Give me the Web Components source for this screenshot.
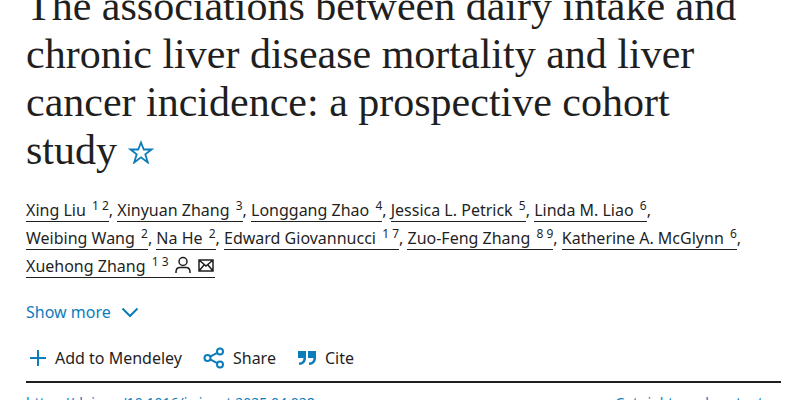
<!DOCTYPE html>
<html lang="en">
<head>
<meta charset="utf-8">
<title>The associations between dairy intake and chronic liver disease mortality and liver cancer incidence</title>
<style>
html{overflow:hidden}
body{margin:0;background:#fff;color:#1f1f1f;font-family:"Noto Sans","Open Sans",sans-serif;font-size:16px}
</style>
</head>
<body>
<article-header></article-header>
<script>
class ArticleTitle extends HTMLElement{
  constructor(){super();this.attachShadow({mode:'open'}).innerHTML=`
<style>
:host{display:block;padding-right:20px}
h1{margin:0;font:400 42px/48px "Liberation Serif",serif;color:#1f1f1f}
a{display:inline-block;line-height:0}
svg{width:26px;height:24px;fill:none;stroke:#0c7dbb;stroke-width:1.8}
</style>
<h1><slot></slot> <a href="#note" aria-label="Article note"><svg viewBox="0 0 26 24"><path d="M13 2.5 15.8 9.5H23.500L17.3 14.3 19.8 22.500 13 17.4 6.2 22.500 8.7 14.3 2.500 9.5H10.2Z"/></svg></a></h1>`}
}
customElements.define('article-title',ArticleTitle);

class AuthorLink extends HTMLElement{
  constructor(){super();this.attachShadow({mode:'open'}).innerHTML=`
<style>
:host{display:inline}
button{all:unset;cursor:pointer;white-space:nowrap;line-height:22px;border-bottom:1px solid #1f1f1f}
sup{font-size:12px;line-height:0;vertical-align:6px;margin-left:2px}
</style>
<button type="button"><slot></slot> <sup>${this.getAttribute('refs')}</sup><slot name="icons"></slot></button>`}
}
customElements.define('author-link',AuthorLink);

class UiIcon extends HTMLElement{
  constructor(){super();
  const icons={
    person:[18,18,'<circle cx="9" cy="5.5" r="4"/><path d="M2 17v-1c0-3 2-4.500 4-4.500h6c2 0 4 1.500 4 4.500v1"/>'],
    mail:[18,18,'<path d="M2 4h14v11H2ZM2 4l7 6 7-6M2 15l5-6M16 15l-5-6"/>'],
    chevron:[18,18,'<path d="m1.500 5.500 7.500 7.500 7.500-7.500"/>'],
    plus:[18,18,'<path d="M9 1v16M1 9h16"/>'],
    share:[22,22,'<circle cx="4.500" cy="11" r="3"/><circle cx="17" cy="4.500" r="3"/><circle cx="17" cy="17.500" r="3"/><path d="m7.200 9.600 7-3.700M7.200 12.400l7 3.700"/>'],
    quote:[20,18,'<path fill="currentColor" stroke="none" d="M1 2h8v7c0 4-2.500 7-7 7v-2.500c3 0 4.500-2 4.500-4.500H1ZM11 2h8v7c0 4-2.500 7-7 7v-2.500c3 0 4.500-2 4.500-4.500H11Z"/>']
  };
  const [w,h,p]=icons[this.getAttribute('name')];
  this.attachShadow({mode:'open'}).innerHTML=`
<style>:host{display:inline-block;line-height:0}svg{display:block;fill:none;stroke:currentColor;stroke-width:var(--stroke,2)}</style>
<svg width="${w}" height="${h}" viewBox="0 0 ${w} ${h}" aria-hidden="true">${p}</svg>`}
}
customElements.define('ui-icon',UiIcon);

class ActionButton extends HTMLElement{
  constructor(){super();this.attachShadow({mode:'open'}).innerHTML=`
<style>
:host{display:block}
button{all:unset;cursor:pointer;display:flex;align-items:center;gap:var(--gap,8px);line-height:24px;white-space:nowrap}
::slotted(ui-icon){color:#0c7dbb}
</style>
<button type="button"><slot></slot></button>`}
}
customElements.define('action-button',ActionButton);

class ArticleHeader extends HTMLElement{
  constructor(){super();this.attachShadow({mode:'open'}).innerHTML=`
<style>
:host{display:block;padding:0 19px 0 26px}
article-title{margin-top:-18px}
.authors{margin-top:22px;padding-right:20px;line-height:28px;--stroke:1.500}
.authors ui-icon{vertical-align:-2px;margin-left:5px}
.more{margin-top:20px;color:#0c7dbb;--gap:10px}
.more action-button{width:max-content}
.actions{display:flex;gap:21px;margin-top:22px;padding:0 3px 11px;border-bottom:2px solid #1f1f1f}
.links{display:flex;justify-content:space-between;margin-top:10px;font-size:14px;line-height:20px;white-space:nowrap}
.links a{color:#0c7dbb;text-decoration:none}
.rights{padding-right:18px}
</style>
<article-title>The associations between dairy intake and chronic liver disease mortality and liver cancer incidence: a prospective cohort study</article-title>
<div class="authors"><author-link refs="1 2">Xing Liu</author-link>, <author-link refs="3">Xinyuan Zhang</author-link>, <author-link refs="4">Longgang Zhao</author-link>, <author-link refs="5">Jessica L. Petrick</author-link>, <author-link refs="6">Linda M. Liao</author-link>, <author-link refs="2">Weibing Wang</author-link>, <author-link refs="2">Na He</author-link>, <author-link refs="1 7">Edward Giovannucci</author-link>, <author-link refs="8 9">Zuo-Feng Zhang</author-link>, <author-link refs="6">Katherine A. McGlynn</author-link>, <author-link refs="1 3">Xuehong Zhang<span slot="icons"><ui-icon name="person"></ui-icon><ui-icon name="mail"></ui-icon></span></author-link></div>
<div class="more"><action-button>Show more <ui-icon name="chevron"></ui-icon></action-button></div>
<div class="actions"><action-button><ui-icon name="plus"></ui-icon>Add to Mendeley</action-button><action-button><ui-icon name="share"></ui-icon>Share</action-button><action-button><ui-icon name="quote"></ui-icon>Cite</action-button></div>
<div class="links"><a href="https://doi.org/10.1016/j.ajcnut.2025.04.028">https://doi.org/10.1016/j.ajcnut.2025.04.028</a><a class="rights" href="#rights">Get rights and content</a></div>`}
}
customElements.define('article-header',ArticleHeader);
</script>
</body>
</html>
